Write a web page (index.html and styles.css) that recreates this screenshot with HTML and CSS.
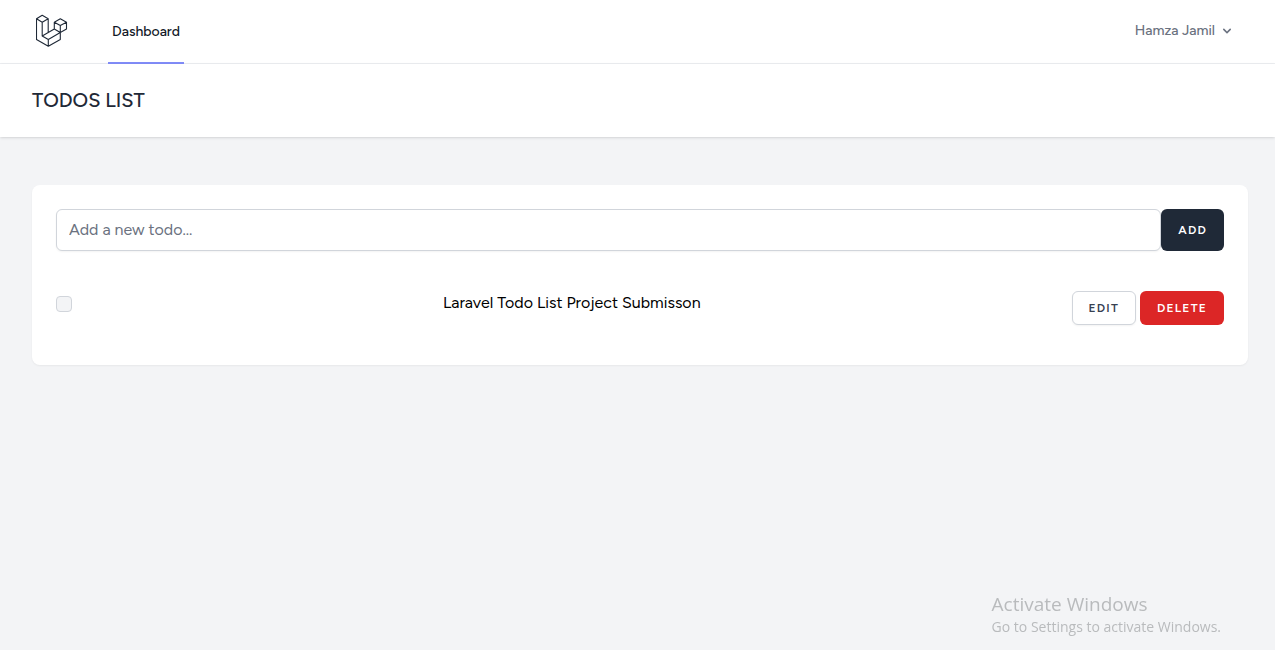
FILE: index.html
```html
<!DOCTYPE html>
<html lang="en">
<head>
<meta charset="utf-8">
<meta name="viewport" content="width=device-width, initial-scale=1">
<title>Todos List</title>
<link rel="stylesheet" href="styles.css">
</head>
<body>
<nav class="navbar">
  <a class="logo" href="#" aria-label="Home">
    <svg viewBox="0 0 32 33" width="32" height="33" fill="none" stroke="currentColor" stroke-width="1.1" stroke-linejoin="round" stroke-linecap="round">
      <path d="M6.2 1.2 12.2 4.7 6.2 8.2.5 4.7zM.5 4.7V25.4L12.3 32.2 24.3 25.4V18.4M6.2 8.2V21.9L12.3 25.4V32.2M12.2 4.7V18.6M6.2 21.9 18.3 15M12.3 25.4 24.3 18.4M24.3 4.8 30.5 8.2 24.3 11.6 18.3 8.2zM18.3 8.2V15L24.3 18.4 30.5 15V8.2M24.3 11.6V18.4"/>
    </svg>
  </a>
  <a class="nav-link" href="#" aria-current="page">Dashboard</a>
  <button class="user-menu" type="button">Hamza Jamil
    <svg viewBox="0 0 20 20" width="16" height="16" fill="currentColor"><path fill-rule="evenodd" clip-rule="evenodd" d="M5.293 7.293a1 1 0 011.414 0L10 10.586l3.293-3.293a1 1 0 111.414 1.414l-4 4a1 1 0 01-1.414 0l-4-4a1 1 0 010-1.414z"/></svg>
  </button>
</nav>
<header class="page-header"><h1 class="page-title">TODOS LIST</h1></header>
<main class="content">
  <section class="card">
    <form class="add-form">
      <input class="todo-input" type="text" placeholder="Add a new todo..." aria-label="New todo">
      <button class="btn btn-dark" type="button">ADD</button>
    </form>
    <ul class="todos">
      <li class="todo">
        <input class="check" type="checkbox" id="todo-1" disabled>
        <label class="todo-name" for="todo-1">Laravel Todo List Project Submisson</label>
        <div class="actions">
          <button class="btn btn-light" type="button">EDIT</button>
          <button class="btn btn-danger" type="button">DELETE</button>
        </div>
      </li>
    </ul>
  </section>
</main>
<aside class="watermark">
  <p class="watermark-title">Activate Windows</p>
  <p class="watermark-text">Go to Settings to activate Windows.</p>
</aside>
</body>
</html>
```
FILE: styles.css
```css
* { box-sizing: border-box; }
body {
  margin: 0;
  min-height: 100vh;
  background: #f3f4f6;
  color: #000;
  font: 16px/24px Figtree, Roboto, sans-serif;
}
button, input { font: inherit; margin: 0; }
h1, p, ul { margin: 0; padding: 0; }
.navbar {
  display: flex;
  height: 64px;
  padding: 0 40px 0 36px;
  background: #fff;
  border-bottom: 1px solid #eceef1;
}
.logo { display: flex; padding-top: 14px; color: #1f2937; }
.nav-link {
  display: flex;
  align-items: center;
  height: 64px;
  margin-left: 40px;
  padding: 2px 4px 0;
  border-bottom: 2px solid #818cf8;
  color: #111827;
  font-size: 14px;
  font-weight: 500;
  line-height: 20px;
  text-decoration: none;
}
.user-menu {
  display: flex;
  align-items: center;
  gap: 4px;
  margin-left: auto;
  padding: 0 0 2px;
  border: 0;
  background: none;
  color: #6b7280;
  font-size: 14px;
  font-weight: 500;
  line-height: 20px;
}
.page-header {
  position: relative;
  padding: 24px 32px;
  background: #fff;
  box-shadow: 0 1px 3px rgba(0, 0, 0, .1), 0 1px 2px -1px rgba(0, 0, 0, .1);
}
.page-title {
  color: #1f2937;
  font-size: 20px;
  font-weight: 500;
  line-height: 25px;
}
.content { padding: 48px 27px 48px 32px; }
.card {
  padding: 24px 24px 40px;
  background: #fff;
  border-radius: 8px;
  box-shadow: 0 1px 2px rgba(0, 0, 0, .05);
}
.add-form { display: flex; }
.todo-input {
  flex: 1;
  min-width: 0;
  padding: 8px 12px;
  border: 1px solid #d1d5db;
  border-radius: 6px;
  background: #fff;
  box-shadow: 0 1px 2px rgba(0, 0, 0, .05);
  line-height: 24px;
}
.todo-input::placeholder { color: #6b7280; opacity: 1; }
.btn {
  padding: 8px 16px;
  border: 1px solid transparent;
  border-radius: 6px;
  font-size: 12px;
  font-weight: 600;
  line-height: 16px;
  letter-spacing: .1em;
}
.btn-dark { background: #1f2937; color: #fff; }
.btn-light {
  background: #fff;
  border-color: #d1d5db;
  box-shadow: 0 1px 2px rgba(0, 0, 0, .05);
  color: #374151;
}
.btn-danger { background: #dc2626; color: #fff; }
.todos { padding-top: 40px; list-style: none; }
.todo { display: flex; justify-content: space-between; align-items: flex-start; }
.check {
  appearance: none;
  width: 16px;
  height: 16px;
  margin-top: 5px;
  border: 1px solid #d1d5db;
  border-radius: 4px;
  background: #f3f4f6;
}
.actions { display: flex; gap: 4px; }
.watermark {
  position: fixed;
  right: 54px;
  bottom: 13px;
  color: #b9bbbd;
  font-family: "Segoe UI", "Open Sans", sans-serif;
  pointer-events: none;
}
.watermark-title { font-size: 19px; line-height: 26px; }
.watermark-text { font-size: 14px; line-height: 20px; }
```
